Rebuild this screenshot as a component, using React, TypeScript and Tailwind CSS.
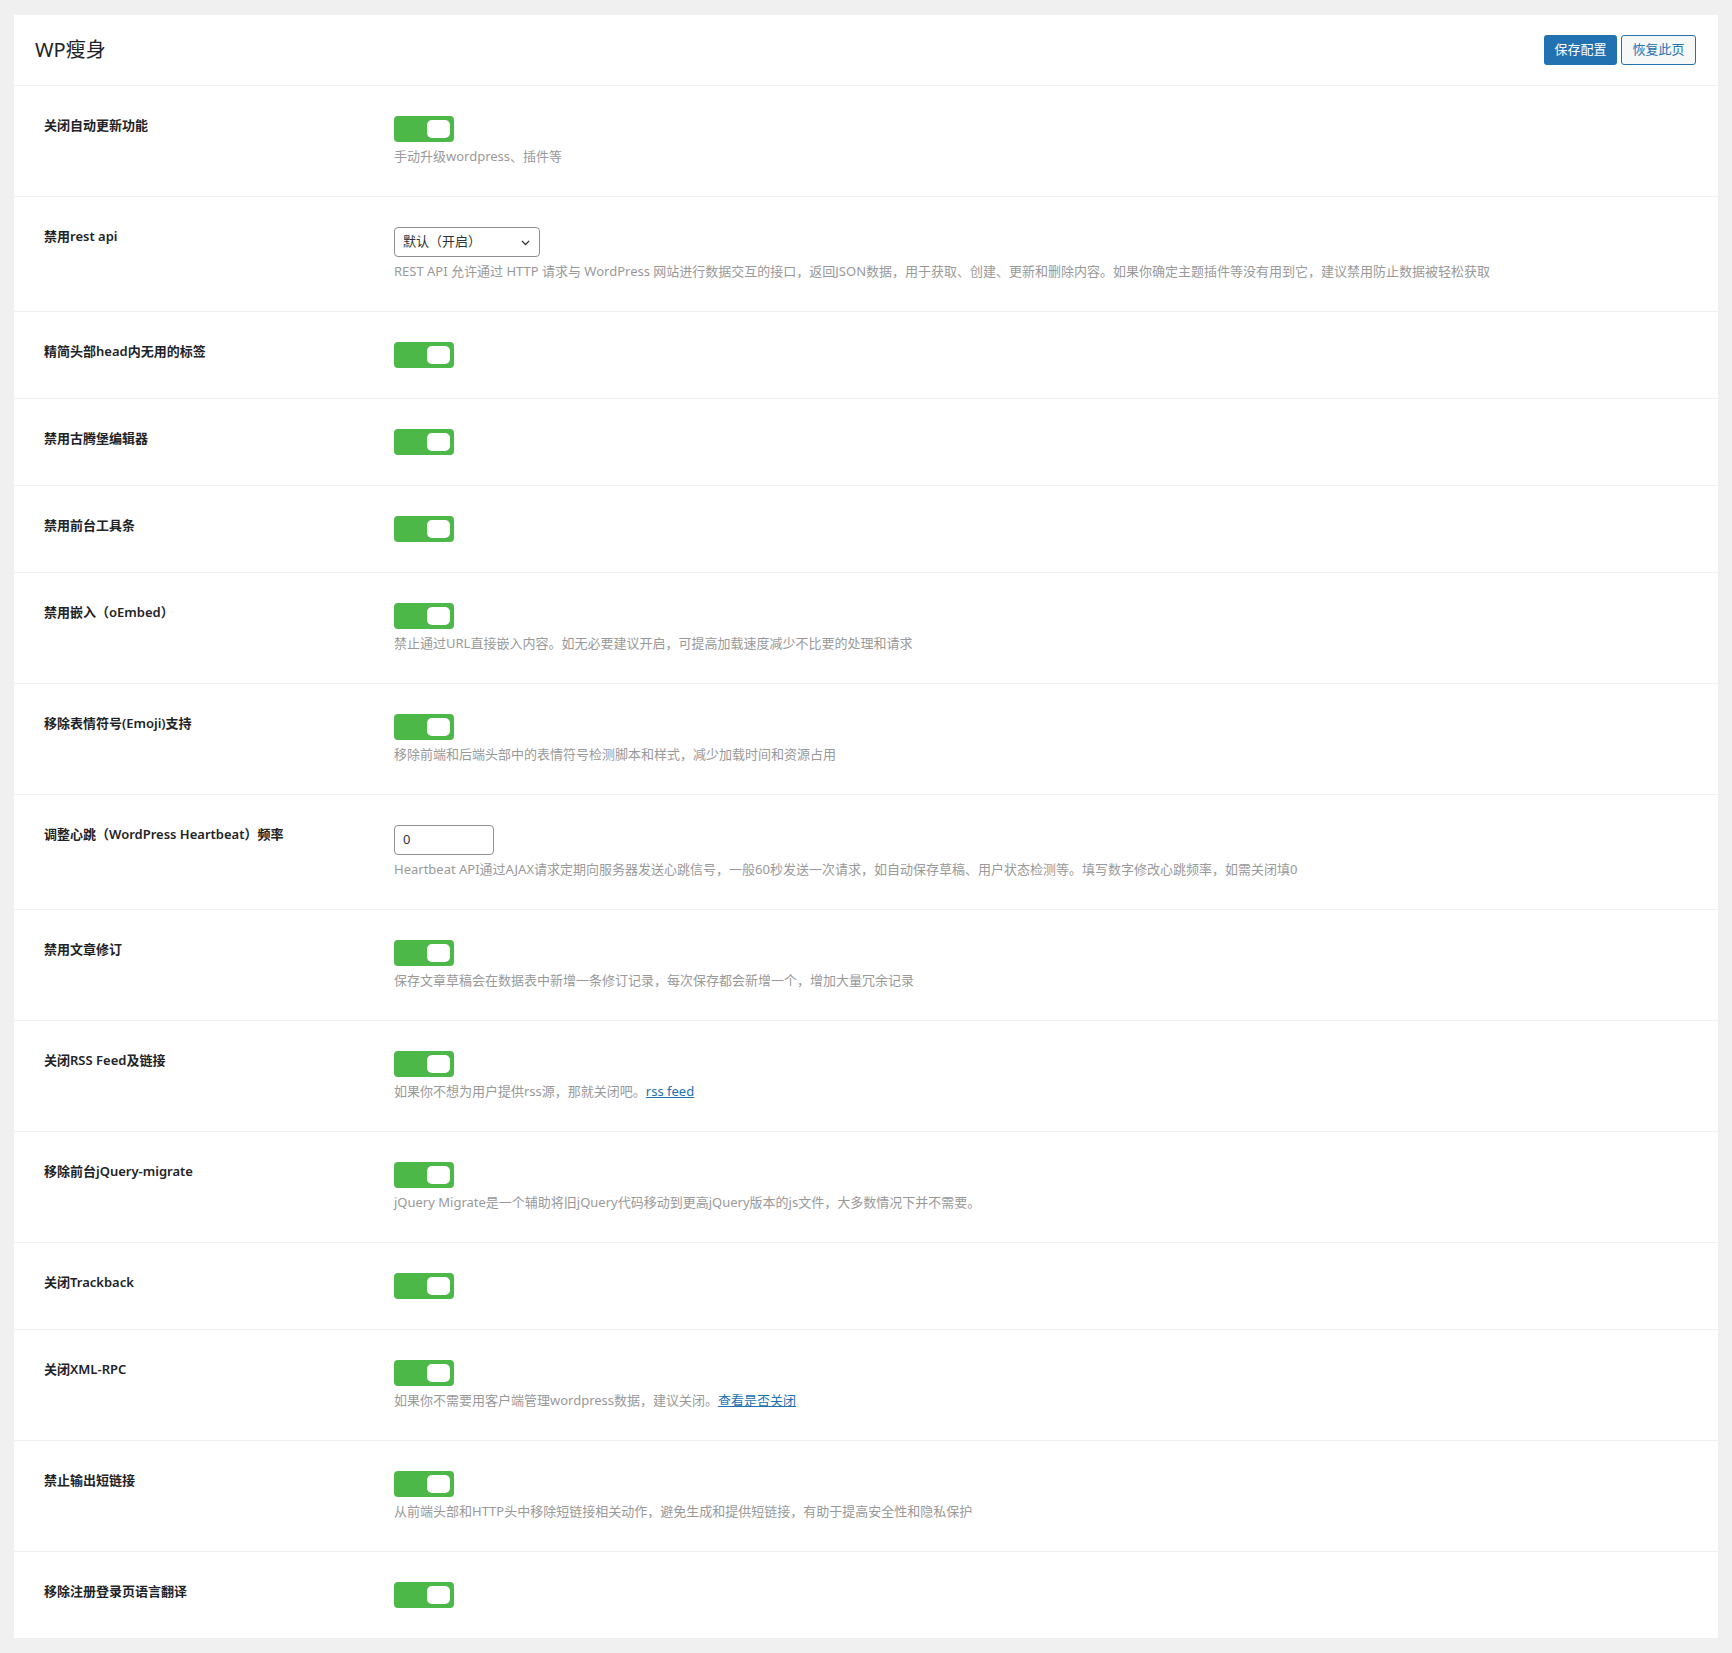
import { ReactNode } from 'react';

type Row = {
  label: string;
  control: 'toggle' | 'select' | 'input';
  desc?: ReactNode;
};

function Link({ children }: { children: ReactNode }) {
  return <a className="text-[#2271b1] underline">{children}</a>;
}

const rows: Row[] = [
  { label: '关闭自动更新功能', control: 'toggle', desc: '手动升级wordpress、插件等' },
  {
    label: '禁用rest api',
    control: 'select',
    desc: 'REST API 允许通过 HTTP 请求与 WordPress 网站进行数据交互的接口，返回JSON数据，用于获取、创建、更新和删除内容。如果你确定主题插件等没有用到它，建议禁用防止数据被轻松获取',
  },
  { label: '精简头部head内无用的标签', control: 'toggle' },
  { label: '禁用古腾堡编辑器', control: 'toggle' },
  { label: '禁用前台工具条', control: 'toggle' },
  {
    label: '禁用嵌入（oEmbed）',
    control: 'toggle',
    desc: '禁止通过URL直接嵌入内容。如无必要建议开启，可提高加载速度减少不比要的处理和请求',
  },
  {
    label: '移除表情符号(Emoji)支持',
    control: 'toggle',
    desc: '移除前端和后端头部中的表情符号检测脚本和样式，减少加载时间和资源占用',
  },
  {
    label: '调整心跳（WordPress Heartbeat）频率',
    control: 'input',
    desc: 'Heartbeat API通过AJAX请求定期向服务器发送心跳信号，一般60秒发送一次请求，如自动保存草稿、用户状态检测等。填写数字修改心跳频率，如需关闭填0',
  },
  {
    label: '禁用文章修订',
    control: 'toggle',
    desc: '保存文章草稿会在数据表中新增一条修订记录，每次保存都会新增一个，增加大量冗余记录',
  },
  {
    label: '关闭RSS Feed及链接',
    control: 'toggle',
    desc: (
      <>
        如果你不想为用户提供rss源，那就关闭吧。<Link>rss feed</Link>
      </>
    ),
  },
  {
    label: '移除前台jQuery-migrate',
    control: 'toggle',
    desc: 'jQuery Migrate是一个辅助将旧jQuery代码移动到更高jQuery版本的js文件，大多数情况下并不需要。',
  },
  { label: '关闭Trackback', control: 'toggle' },
  {
    label: '关闭XML-RPC',
    control: 'toggle',
    desc: (
      <>
        如果你不需要用客户端管理wordpress数据，建议关闭。<Link>查看是否关闭</Link>
      </>
    ),
  },
  {
    label: '禁止输出短链接',
    control: 'toggle',
    desc: '从前端头部和HTTP头中移除短链接相关动作，避免生成和提供短链接，有助于提高安全性和隐私保护',
  },
  { label: '移除注册登录页语言翻译', control: 'toggle' },
];

function Toggle() {
  return (
    <div className="flex h-[26px] w-[60px] items-center justify-end rounded-[4px] bg-[#4cb848] pr-[4px]">
      <div className="h-[18px] w-[23px] rounded-[5px] bg-white" />
    </div>
  );
}

function Select() {
  return (
    <div className="flex h-[30px] w-[146px] items-center justify-between rounded-[4px] border border-[#8c8f94] bg-white pl-[8px] pr-[8px] text-[13px] text-[#2c3338]">
      <span>默认（开启）</span>
      <svg width="11" height="11" viewBox="0 0 12 12" fill="none">
        <path d="M2 4.2l4 4 4-4" stroke="#2c3338" strokeWidth="1.4" />
      </svg>
    </div>
  );
}

function NumberInput() {
  return (
    <div className="flex h-[30px] w-[100px] items-center rounded-[4px] border border-[#8c8f94] bg-white pl-[8px] text-[13px] text-[#2c3338]">
      0
    </div>
  );
}

export default function App() {
  return (
    <div className="min-h-screen bg-[#f0f0f1] px-[14px] pb-[13px] pt-[15px] font-['Noto_Sans','Noto_Sans_CJK_SC',sans-serif]">
      <div className="bg-white">
        <div className="flex h-[70px] items-center justify-between pl-[21px] pr-[22px]">
          <h1 className="text-[20px] text-[#1d2327]">WP瘦身</h1>
          <div className="flex gap-[4px]">
            <button className="h-[30px] w-[73px] rounded-[3px] bg-[#2271b1] text-[13px] text-white">
              保存配置
            </button>
            <button className="h-[30px] w-[75px] rounded-[3px] border border-[#2271b1] bg-[#f6f7f7] text-[13px] text-[#2271b1]">
              恢复此页
            </button>
          </div>
        </div>
        {rows.map((row) => (
          <div key={row.label} className="flex border-t border-[#f0f0f1]">
            <div className="w-[380px] shrink-0 pl-[30px] pt-[29px] text-[13px] font-semibold leading-[20px] text-[#1d2327]">
              {row.label}
            </div>
            <div className="py-[30px]">
              {row.control === 'toggle' && <Toggle />}
              {row.control === 'select' && <Select />}
              {row.control === 'input' && <NumberInput />}
              {row.desc && (
                <p className="mt-[5px] text-[13px] leading-[19px] text-[#999]">{row.desc}</p>
              )}
            </div>
          </div>
        ))}
      </div>
    </div>
  );
}
